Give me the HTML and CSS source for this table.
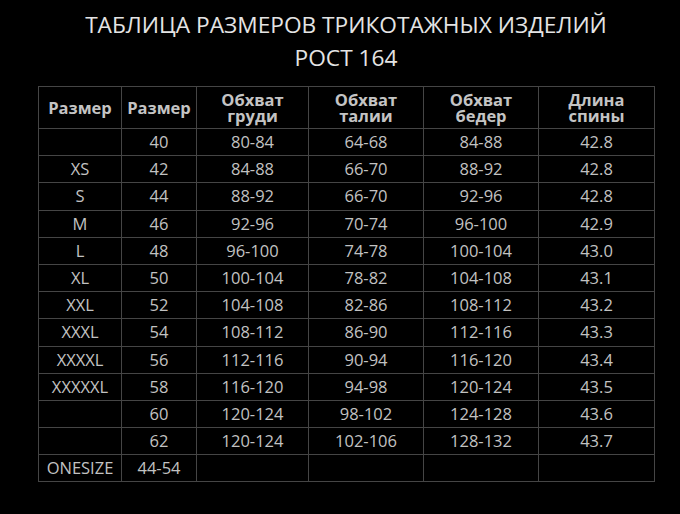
FILE: index.html
```html
<!DOCTYPE html>
<html lang="ru">
<head>
<meta charset="utf-8">
<link rel="stylesheet" href="styles.css">
</head>
<body>
<div class="page">
  <h1 class="title">ТАБЛИЦА РАЗМЕРОВ ТРИКОТАЖНЫХ ИЗДЕЛИЙ<br>РОСТ 164</h1>
  <table class="sizes">
    <colgroup>
      <col class="c1"><col class="c2"><col class="c3"><col class="c4"><col class="c5"><col class="c6">
    </colgroup>
    <thead>
      <tr><th>Размер</th><th>Размер</th><th>Обхват<br>груди</th><th>Обхват<br>талии</th><th>Обхват<br>бедер</th><th>Длина<br>спины</th></tr>
    </thead>
    <tbody>
      <tr><td></td><td>40</td><td>80-84</td><td>64-68</td><td>84-88</td><td>42.8</td></tr>
      <tr><td>XS</td><td>42</td><td>84-88</td><td>66-70</td><td>88-92</td><td>42.8</td></tr>
      <tr><td>S</td><td>44</td><td>88-92</td><td>66-70</td><td>92-96</td><td>42.8</td></tr>
      <tr><td>M</td><td>46</td><td>92-96</td><td>70-74</td><td>96-100</td><td>42.9</td></tr>
      <tr><td>L</td><td>48</td><td>96-100</td><td>74-78</td><td>100-104</td><td>43.0</td></tr>
      <tr><td>XL</td><td>50</td><td>100-104</td><td>78-82</td><td>104-108</td><td>43.1</td></tr>
      <tr><td>XXL</td><td>52</td><td>104-108</td><td>82-86</td><td>108-112</td><td>43.2</td></tr>
      <tr><td>XXXL</td><td>54</td><td>108-112</td><td>86-90</td><td>112-116</td><td>43.3</td></tr>
      <tr><td>XXXXL</td><td>56</td><td>112-116</td><td>90-94</td><td>116-120</td><td>43.4</td></tr>
      <tr><td>XXXXXL</td><td>58</td><td>116-120</td><td>94-98</td><td>120-124</td><td>43.5</td></tr>
      <tr><td></td><td>60</td><td>120-124</td><td>98-102</td><td>124-128</td><td>43.6</td></tr>
      <tr><td></td><td>62</td><td>120-124</td><td>102-106</td><td>128-132</td><td>43.7</td></tr>
      <tr><td>ONESIZE</td><td>44-54</td><td></td><td></td><td></td><td></td></tr>
    </tbody>
  </table>
</div>
</body>
</html>
```
FILE: styles.css
```css
html, body {
  margin: 0;
  padding: 0;
  background: #000;
}
body {
  width: 680px;
  height: 514px;
  overflow: hidden;
  font-family: "Open Sans", "DejaVu Sans", sans-serif;
  color: #c6c6c6;
}
.page {
  width: 616px;
  margin-left: 38px;
  padding-top: 8px;
}
.title {
  margin: 0 0 12px;
  font-size: 22.7px;
  font-weight: 400;
  line-height: 33px;
  text-align: center;
  color: #e4e4e4;
}
.sizes {
  width: 616px;
  border-collapse: collapse;
  table-layout: fixed;
}
.c1 { width: 83px; }
.c2 { width: 75px; }
.c3 { width: 112px; }
.c4 { width: 115px; }
.c5 { width: 115px; }
.c6 { width: 116px; }
.sizes th, .sizes td {
  border: 1px solid #454545;
  padding: 0;
  text-align: center;
}
.sizes th {
  height: 41px;
  font-size: 16.5px;
  font-weight: 700;
  line-height: 16px;
  color: #c4c4c4;
}
.sizes td {
  height: 26.2px;
  font-size: 16.5px;
  line-height: 26px;
  color: #c2c2c2;
}
```
